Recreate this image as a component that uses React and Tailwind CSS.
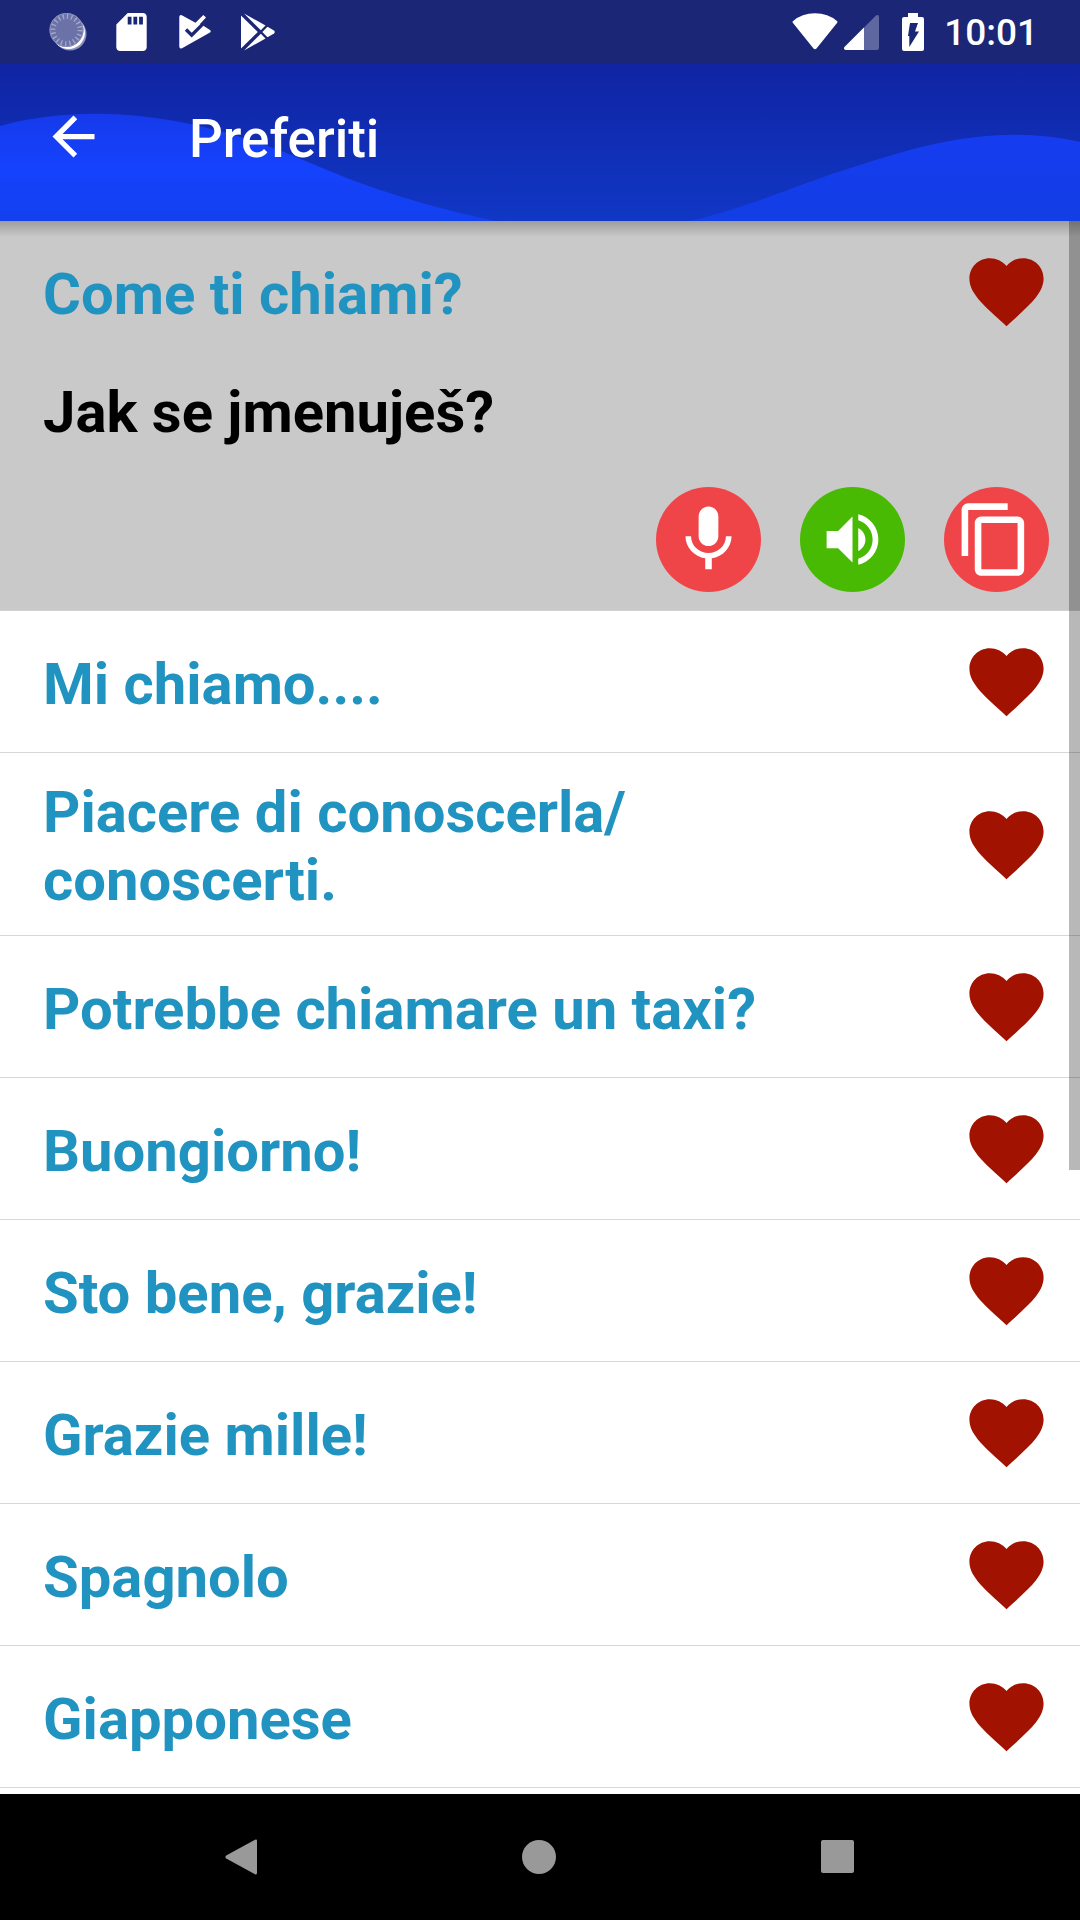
import React, { useState } from "react";

const phrases = [
  { id: 1, text: "Come ti chiami?", translation: "Jak se jmenuješ?" },
  { id: 2, text: "Mi chiamo...." },
  { id: 3, text: "Piacere di conoscerla/\nconoscerti." },
  { id: 4, text: "Potrebbe chiamare un taxi?" },
  { id: 5, text: "Buongiorno!" },
  { id: 6, text: "Sto bene, grazie!" },
  { id: 7, text: "Grazie mille!" },
  { id: 8, text: "Spagnolo" },
  { id: 9, text: "Giapponese" },
];

const Icon = ({ d, className, viewBox = "0 0 24 24" }) => (
  <svg viewBox={viewBox} className={className} fill="currentColor" aria-hidden="true">
    <path d={d} />
  </svg>
);

const HEART =
  "M12 21.35l-1.45-1.32C5.4 15.36 2 12.28 2 8.5 2 5.42 4.42 3 7.5 3c1.74 0 3.41.81 4.5 2.09C13.09 3.81 14.76 3 16.5 3 19.58 3 22 5.42 22 8.5c0 3.78-3.4 6.86-8.55 11.54L12 21.35z";
const ARROW = "M20 11H7.83l5.59-5.59L12 4l-8 8 8 8 1.41-1.41L7.83 13H20v-2z";
const MIC =
  "M12 14c1.66 0 2.99-1.34 2.99-3L15 5c0-1.66-1.34-3-3-3S9 3.34 9 5v6c0 1.66 1.34 3 3 3zm5.3-3c0 3-2.54 5.1-5.3 5.1S6.7 14 6.7 11H5c0 3.41 2.72 6.23 6 6.72V21h2v-3.28c3.28-.48 6-3.3 6-6.72h-1.7z";
const VOLUME =
  "M3 9v6h4l5 5V4L7 9H3zm13.5 3c0-1.77-1.02-3.29-2.5-4.03v8.05c1.48-.73 2.5-2.25 2.5-4.02zM14 3.23v2.06c2.89.86 5 3.54 5 6.71s-2.11 5.85-5 6.71v2.06c4.01-.91 7-4.49 7-8.77s-2.99-7.86-7-8.77z";
const COPY =
  "M16 1H4c-1.1 0-2 .9-2 2v14h2V3h12V1zm3 4H8c-1.1 0-2 .9-2 2v14c0 1.1.9 2 2 2h11c1.1 0 2-.9 2-2V7c0-1.1-.9-2-2-2zm0 16H8V7h11v14z";
const SD_CARD =
  "M18 2h-8L4.02 8 4 20c0 1.1.9 2 2 2h12c1.1 0 2-.9 2-2V4c0-1.1-.9-2-2-2zm-6 6h-2V4h2v4zm3 0h-2V4h2v4zm3 0h-2V4h2v4z";

const StatusBar = () => (
  <div className="flex h-[63px] items-center justify-between bg-[#1b2677] pl-[49px] pr-[42px] text-white">
    <div className="flex items-center">
      {/* sync spinner */}
      <svg viewBox="0 0 38 38" className="size-[38px]" aria-hidden="true">
        <circle cx="21" cy="21" r="16.5" fill="#fff" fillOpacity="0.5" />
        <circle cx="19.5" cy="19.5" r="16.5" fill="#fff" />
        <circle cx="17.5" cy="17" r="17" fill="#6b72a8" />
        <circle
          cx="17.5"
          cy="17"
          r="13.5"
          fill="none"
          stroke="#a5a9c9"
          strokeWidth="5"
          strokeDasharray="1.3 2.94"
        />
        <circle cx="17.5" cy="17" r="16.5" fill="none" stroke="#8d93bc" strokeWidth="1" />
      </svg>
      <Icon d={SD_CARD} viewBox="4 2 16 20" className="ml-[29px] h-[38px] w-[31px]" />
      {/* play protect */}
      <svg viewBox="0 0 32 36" className="ml-8 h-9 w-8" aria-hidden="true">
        <path
          d="M2.8 1.3L16.5 8.7L24.3 1L27 3.6L21 10L24 11.6L31 15.9Q32.5 17.2 31 18.5L3 34.3Q.3 35.3 .3 32.5V3Q.5 .5 2.8 1.3z"
          fill="#fff"
        />
        <path d="M7 15.5L12.7 21.2L23.5 10.4" fill="none" stroke="#1b2677" strokeWidth="3.4" />
      </svg>
      <svg viewBox="0 0 34 38" className="ml-[30px] h-[38px] w-[34px]" fill="#fff" aria-hidden="true">
        <path d="M0 2.5L16.8 19L0 35.5z" />
        <path d="M3 .5L24.5 12.5L19.8 17.2z" />
        <path d="M3 37.5L24.5 25.5L19.8 20.8z" />
        <path d="M26.5 13.7L33 17.5Q34.5 19 33 20.5L26.5 24.3L21.3 19z" />
      </svg>
    </div>
    <div className="flex items-center">
      <svg viewBox="0 0 46 37" className="h-[37px] w-[46px]" fill="#fff" aria-hidden="true">
        <path d="M.8 8.2Q10 .3 23 .3T45.2 8.2Q46 9 45 10L24.5 35.5Q23 37 21.5 35.5L1 10Q0 9 .8 8.2z" />
      </svg>
      <svg viewBox="0 0 35 36" className="ml-1.5 h-9 w-[35px]" fill="#fff" aria-hidden="true">
        <path d="M.5 33L32 1.5Q35 0 35 3V34Q35 36 33 36H2Q-1 35.5 .5 33z" fillOpacity="0.3" />
        <path d="M.5 33L20 13.5V36H2Q-1 35.5 .5 33z" />
      </svg>
      <svg viewBox="0 0 22 38" className="ml-[23px] h-[38px] w-[22px]" aria-hidden="true">
        <path d="M6 0H16V4H20Q22 4 22 6V36Q22 38 20 38H2Q0 38 0 36V6Q0 4 2 4H6z" fill="#fff" />
        <path d="M8 10H16L13 18.5H17L7.3 34V23H6z" fill="#1b2677" />
      </svg>
      <span className="ml-5 pt-0.5 text-[37px] font-medium leading-[43px]">10:01</span>
    </div>
  </div>
);

const Header = () => (
  <header className="relative z-10">
    <div className="relative bg-linear-to-b from-[#1024a3] to-[#1037c6] pb-[11px]">
      <svg
        viewBox="0 0 1080 158"
        preserveAspectRatio="none"
        className="absolute inset-0 size-full"
        aria-hidden="true"
      >
        <defs>
          <linearGradient id="wave" x1="0" y1="50" x2="0" y2="158" gradientUnits="userSpaceOnUse">
            <stop offset="0" stopColor="#163aea" />
            <stop offset="0.5" stopColor="#1542fd" />
            <stop offset="1" stopColor="#1340ee" />
          </linearGradient>
          <linearGradient id="waveRight" x1="0" y1="71" x2="0" y2="158" gradientUnits="userSpaceOnUse">
            <stop offset="0" stopColor="#163cf0" />
            <stop offset="1" stopColor="#123ee4" />
          </linearGradient>
        </defs>
        <path d="M0 63C60 46 130 48 190 61C270 78 310 102 360 120C410 138 450 148 495 158H0z" fill="url(#wave)" />
        <path d="M690 158C760 141 800 120 860 102C930 79 1000 61 1080 79V158z" fill="url(#waveRight)" />
      </svg>
      <div className="relative flex h-[147px] items-center gap-[84px] pl-[42px] text-white">
        <button type="button" aria-label="Indietro">
          <Icon d={ARROW} className="size-[63px]" />
        </button>
        <h1 className="pt-1 text-[53px] font-medium leading-[62px]">Preferiti</h1>
      </div>
    </div>
    {/* shadow cast on the list */}
    <div className="absolute inset-x-0 top-full h-4 bg-linear-to-b from-black/22 to-transparent" />
  </header>
);

const RoundButton = ({ label, className, children }) => (
  <button
    type="button"
    aria-label={label}
    className={`flex size-[105px] items-center justify-center rounded-full text-white ${className}`}
  >
    {children}
  </button>
);

const Phrase = ({ phrase, open, onToggle }) => (
  <li className={`border-b ${open ? "border-[#d2d2d2] bg-[#c9c9c9]" : "border-[#d8d8d8] bg-white"}`}>
    <div className="flex min-h-[141px] items-center justify-between pl-[43px] pr-[29px]">
      <button
        type="button"
        onClick={onToggle}
        className="whitespace-pre-line pt-[25px] pb-[21px] text-left text-[58px] font-bold leading-[68px] text-[#2093c0]"
      >
        {phrase.text}
      </button>
      <button type="button" aria-label="Rimuovi dai preferiti" className="text-[#a11200]">
        <Icon d={HEART} className="size-[89px]" />
      </button>
    </div>
    {open && (
      <>
        <p className="px-[43px] pt-4 text-[58px] font-bold leading-[68px] text-black">
          {phrase.translation}
        </p>
        <div className="flex justify-end gap-[39px] pt-[41px] pr-[31px] pb-[18px]">
          <RoundButton label="Registra" className="bg-[#f04548]">
            <Icon d={MIC} className="size-[79px]" />
          </RoundButton>
          <RoundButton label="Ascolta" className="bg-[#48ba04]">
            <Icon d={VOLUME} className="size-[69px]" />
          </RoundButton>
          <RoundButton label="Copia" className="bg-[#f04548]">
            <Icon d={COPY} viewBox="0.6 0 24 24" className="size-[79px]" />
          </RoundButton>
        </div>
      </>
    )}
  </li>
);

const NavBar = () => (
  <nav className="grid h-[126px] grid-cols-3 items-center justify-items-center bg-black pr-[94px] pb-px pl-[92px] text-[#999999]">
    <button type="button" aria-label="Back">
      <Icon
        d="M30 .8Q32 0 32 2V34Q32 36 30 35.2L1.2 19.5Q-.5 18 1.2 16.5z"
        viewBox="0 0 32 36"
        className="h-9 w-8"
      />
    </button>
    <button type="button" aria-label="Home" className="size-[34px] rounded-full bg-[#999999]" />
    <button type="button" aria-label="Recents" className="size-[33px] rounded-xs bg-[#999999]" />
  </nav>
);

const App = () => {
  const [openId, setOpenId] = useState(1);

  return (
    <div className="flex min-h-screen flex-col bg-white font-[Roboto,sans-serif]">
      <StatusBar />
      <Header />
      <main className="relative flex-1">
        <ul>
          {phrases.map((phrase) => (
            <Phrase
              key={phrase.id}
              phrase={phrase}
              open={openId === phrase.id}
              onToggle={() => setOpenId(phrase.id)}
            />
          ))}
        </ul>
        {/* scroll thumb */}
        <div className="absolute top-0 right-0 h-[949px] w-[11px] bg-black/28" />
      </main>
      <NavBar />
    </div>
  );
};

export default App;
